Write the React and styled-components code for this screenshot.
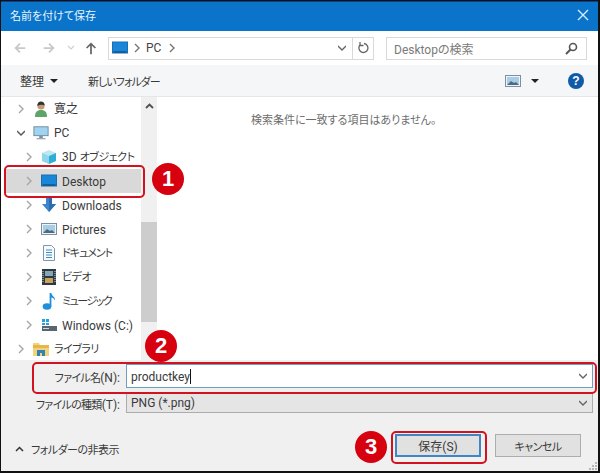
import React from "react";
import styled, { createGlobalStyle } from "styled-components";

const Global = createGlobalStyle`
  html, body { margin: 0; padding: 0; background: #fff; }
  * { box-sizing: border-box; }
`;

const Dialog = styled.div`
  position: relative;
  width: 600px;
  height: 473px;
  display: flex;
  flex-direction: column;
  overflow: hidden;
  background: #fff;
  border: solid #111;
  border-width: 1px 2px 2px 1px;
  font-family: Roboto, "Noto Sans CJK JP", sans-serif;
  font-size: 12px;
  font-feature-settings: "palt";
  color: #3a3a3a;
`;

// katakana in the dialog runs much narrower than Noto's, so it gets its own size
const Kana = styled.span`
  font-size: 11px;
  letter-spacing: ${(p) => p.$track ?? -0.5}px;
`;

const TitleBar = styled.div`
  height: 30px;
  flex: none;
  display: flex;
  align-items: center;
  justify-content: space-between;
  padding: 0 9px 3px;
  background: #0a74ca;
  border-top: 1px solid #0a3f8a;
  color: #e8f3fb;
  font-size: 11px;
`;

const NavBar = styled.div`
  height: 34px;
  flex: none;
  display: flex;
  align-items: center;
  padding: 0 6px 0 12px;
`;

const NavButton = styled.span`
  width: ${(p) => p.$w || 16}px;
  margin-right: ${(p) => p.$mr || 0}px;
  display: flex;
  justify-content: center;
`;

const AddressBox = styled.div`
  width: 266px;
  height: 23px;
  margin-left: 2px;
  display: flex;
  align-items: center;
  border: 1px solid #d9d9d9;
  padding-left: 3px;
  color: #444;
`;

const Crumb = styled.span`
  margin: 0 ${(p) => p.$gap || 5}px;
  display: flex;
`;

const AddressCaret = styled.svg`
  margin-left: auto;
  margin-right: 6px;
`;

const RefreshCell = styled.span`
  width: 21px;
  height: 100%;
  display: flex;
  align-items: center;
  justify-content: center;
  border-left: 1px solid #d9d9d9;
`;

const SearchBox = styled.div`
  width: 201px;
  height: 23px;
  margin-left: 12px;
  display: flex;
  align-items: center;
  justify-content: space-between;
  padding: 0 8px 0 7px;
  border: 1px solid #d9d9d9;
  color: #7a7a7a;
`;

const ToolBar = styled.div`
  height: 32px;
  flex: none;
  display: flex;
  align-items: center;
  padding: 0 14px 0 19px;
  background: #f5f6f7;
  border-bottom: 1px solid #e6e6e6;
`;

const ToolLabel = styled.span`
  display: flex;
  align-items: center;
  gap: 6px;
  margin-right: ${(p) => p.$mr || 0}px;
`;

const Caret = styled.span`
  width: 0;
  height: 0;
  border-left: 4px solid transparent;
  border-right: 4px solid transparent;
  border-top: 4px solid #222;
`;

const ToolRight = styled.div`
  margin-left: auto;
  display: flex;
  align-items: center;
  gap: 10px;
`;

const HelpIcon = styled.span`
  width: 16px;
  height: 16px;
  margin-left: 19px;
  border-radius: 50%;
  background: #0f5ba7;
  color: #fff;
  font: bold 12px/16px "Liberation Sans", sans-serif;
  text-align: center;
`;

const Body = styled.div`
  flex: 1;
  min-height: 0;
  display: flex;
`;

const Tree = styled.div`
  width: 140px;
  flex: none;
  padding-left: 3px;
  overflow: hidden;
`;

const TreeRow = styled.div`
  height: 24px;
  flex: none;
  display: flex;
  align-items: center;
  padding-left: ${(p) => (p.$level === 2 ? 21 : 13)}px;
  background: ${(p) => (p.$selected ? "#d9d9d9" : "transparent")};
  white-space: nowrap;
  line-height: 16px;
`;

const Chevron = styled.span`
  width: 8px;
  display: flex;
  justify-content: center;
  margin-right: 8px;
`;

const TreeIcon = styled.span`
  width: 16px;
  height: 16px;
  margin-right: 5px;
  display: flex;
  align-items: center;
  justify-content: center;
`;

const TreeText = styled.span`
  margin-top: ${(p) => (p.$latin ? 1 : 0)}px;
`;

const ScrollBar = styled.div`
  width: 16px;
  flex: none;
  background: #f0f0f0;
  display: flex;
  flex-direction: column;
  align-items: center;
`;

const ScrollArrow = styled.span`
  height: 16px;
  margin-top: 1px;
  display: flex;
  align-items: center;
`;

const ScrollThumb = styled.div`
  width: 100%;
  height: 100px;
  margin-top: 108px;
  background: #cdcdcd;
`;

const Main = styled.div`
  flex: 1;
  padding: 14px 0 0 94px;
  font-size: 11px;
  color: #6d6d6d;
`;

const Bottom = styled.div`
  height: 111px;
  flex: none;
  position: relative;
  background: #f0f0f0;
  padding: 4px 5px 0 0;
`;

const FormRow = styled.div`
  display: grid;
  grid-template-columns: 125px 1fr;
  align-items: center;
  height: ${(p) => p.$h}px;
  margin-bottom: ${(p) => p.$mb || 0}px;
`;

const FieldLabel = styled.label`
  text-align: right;
  padding-right: 6px;
  padding-top: 1px;
`;

const Field = styled.div`
  height: 100%;
  display: flex;
  align-items: center;
  justify-content: space-between;
  padding: 0 5px 0 4px;
  background: ${(p) => (p.$active ? "#fff" : "#e5e5e5")};
  border: 1px solid ${(p) => (p.$active ? "#6f9fc0" : "#acacac")};
`;

const TextCursor = styled.span`
  display: inline-block;
  width: 1px;
  height: 15px;
  background: #111;
  vertical-align: -3px;
`;

const Footer = styled.div`
  margin-top: 21px;
  display: flex;
  align-items: center;
  justify-content: space-between;
  padding: 0 12px 0 14px;
`;

const HideFolders = styled.span`
  display: flex;
  align-items: center;
  gap: 7px;
  padding-top: 6px;
`;

const Buttons = styled.div`
  display: flex;
  gap: 14px;
`;

const Button = styled.button`
  width: 86px;
  height: 23px;
  padding: 0;
  font: inherit;
  font-feature-settings: "palt";
  color: #3a3a3a;
  background: #e1e1e1;
  border: ${(p) => (p.$primary ? "2px solid #3f86c4" : "1px solid #adadad")};
`;

const Grip = styled.svg`
  position: absolute;
  right: 0;
  bottom: 0;
`;

const Ring = styled.div`
  position: absolute;
  left: ${(p) => p.$x}px;
  top: ${(p) => p.$y}px;
  width: ${(p) => p.$w}px;
  height: ${(p) => p.$h}px;
  border: 2px solid #d3121f;
  border-radius: 5px;
`;

const Badge = styled.div`
  position: absolute;
  left: ${(p) => p.$x - 16}px;
  top: ${(p) => p.$y - 16}px;
  width: 32px;
  height: 32px;
  border-radius: 50%;
  background: #d7000f;
  color: #fff;
  font: bold 22px/32px "Liberation Sans", sans-serif;
  text-align: center;
`;

const Arrow = ({ d, color = "#c8c8c8", width = 2 }) => (
  <svg width="16" height="16" viewBox="0 0 16 16" fill="none" stroke={color} strokeWidth={width}>
    <path d={d} />
  </svg>
);

const Chev = ({ open, color = "#a6a6a6" }) => (
  <svg width="8" height="10" viewBox="0 0 8 10" fill="none" stroke={color} strokeWidth="1.4">
    <path d={open ? "M0 3l4 4 4-4" : "M2 1l4 4-4 4"} />
  </svg>
);

const ScreenIcon = () => (
  <svg width="16" height="14" viewBox="0 0 16 14">
    <rect x="0.5" y="1" width="15" height="11" fill="#1a86d8" stroke="#1a6fb4" />
    <rect x="1.5" y="10.5" width="13" height="1" fill="#0d3e66" />
  </svg>
);

const PcIcon = () => (
  <svg width="18" height="16" viewBox="0 0 18 16">
    <rect x="1" y="1" width="16" height="10" fill="#9fd3f2" stroke="#6f8596" />
    <path d="M7 11.5h4v2H7zM4 14h10v1H4z" fill="#7f8f9b" />
  </svg>
);

const UserIcon = () => (
  <svg width="16" height="16" viewBox="0 0 16 16">
    <path d="M2 16c0-5 2-7 6-7s6 2 6 7z" fill="#5ea36a" />
    <circle cx="8" cy="5" r="3.6" fill="#c59a72" />
    <path d="M4.3 5c0-3 1.6-4.4 3.7-4.4S11.700 2 11.700 4.500C9.500 3.500 7 3.500 4.300 5z" fill="#333" />
  </svg>
);

const CubeIcon = () => (
  <svg width="16" height="16" viewBox="0 0 16 16">
    <path d="M8 1l7 3v8l-7 3-7-3V4z" fill="#bfe7f3" />
    <path d="M8 7l7-3v8l-7 3z" fill="#2eaed6" />
    <path d="M8 7L1 4v8l7 3z" fill="#8fd6ea" />
  </svg>
);

const DownloadIcon = () => (
  <svg width="16" height="16" viewBox="0 0 16 16">
    <path d="M5 1h6v6h4l-7 8-7-8h4z" fill="#3d86cf" />
    <path d="M8 1h3v6h4l-7 8z" fill="#2a6db0" />
  </svg>
);

const PictureIcon = () => (
  <svg width="16" height="14" viewBox="0 0 16 14">
    <rect x="0.500" y="1.500" width="15" height="11" fill="#eef4f9" stroke="#7f8f9b" />
    <rect x="2" y="3" width="12" height="8" fill="#a8cde6" />
    <path d="M2 11l4-4 3 2 2-1 3 3z" fill="#4f6a7d" />
  </svg>
);

const DocIcon = () => (
  <svg width="14" height="16" viewBox="0 0 14 16">
    <path d="M1.500.5h8l3 3v12h-11z" fill="#f6fafd" stroke="#7f95a8" />
    <path d="M4 5h6M4 7.500h6M4 10h6M4 12.500h6" stroke="#3b8fc4" />
  </svg>
);

const VideoIcon = () => (
  <svg width="14" height="16" viewBox="0 0 14 16">
    <rect x="0" y="0" width="14" height="16" fill="#2d3a42" />
    <rect x="3" y="2" width="8" height="5" fill="#86a7b8" />
    <rect x="3" y="9" width="8" height="5" fill="#c9a35d" />
    <path d="M1 2v12M13 2v12" stroke="#d8e0e4" strokeDasharray="1 1" />
  </svg>
);

const MusicIcon = () => (
  <svg width="14" height="18" viewBox="0 0 14 18">
    <ellipse cx="5" cy="14.500" rx="4.300" ry="3.200" fill="#1f8fdc" />
    <path d="M7.600 14.500V1h1.800c.3 3 4 3.500 3.600 7.500-.8-2-2.500-3-3.600-3v9z" fill="#1f8fdc" />
  </svg>
);

const DriveIcon = () => (
  <svg width="16" height="14" viewBox="0 0 16 14">
    <rect x="1" y="8" width="15" height="5" fill="#59666e" />
    <rect x="2" y="10" width="6" height="1" fill="#cfd8dc" />
    <rect x="1" y="1" width="3" height="3" fill="#27a2dd" />
    <rect x="5" y="1" width="3" height="3" fill="#27a2dd" />
    <rect x="1" y="5" width="3" height="2" fill="#27a2dd" />
    <rect x="5" y="5" width="3" height="2" fill="#27a2dd" />
  </svg>
);

const LibraryIcon = () => (
  <svg width="16" height="16" viewBox="0 0 16 16">
    <path d="M0 2h6l1 2h9v11H0z" fill="#f4d27a" />
    <path d="M0 4h16v3H0z" fill="#e6b64d" />
    <rect x="4" y="9" width="8" height="6" fill="#2f82b8" />
    <rect x="7" y="12" width="2" height="3" fill="#f4d27a" />
  </svg>
);

const treeItems = [
  { level: 1, icon: <UserIcon />, label: "寛之" },
  { level: 1, icon: <PcIcon />, label: "PC", open: true },
  { level: 2, icon: <CubeIcon />, label: <>3D <Kana>オブジェクト</Kana></> },
  { level: 2, icon: <ScreenIcon />, label: "Desktop", selected: true, latin: true },
  { level: 2, icon: <DownloadIcon />, label: "Downloads", latin: true },
  { level: 2, icon: <PictureIcon />, label: "Pictures", latin: true },
  { level: 2, icon: <DocIcon />, label: <Kana $track={-1}>ドキュメント</Kana> },
  { level: 2, icon: <VideoIcon />, label: <Kana>ビデオ</Kana> },
  { level: 2, icon: <MusicIcon />, label: <Kana $track={-1.500}>ミュージック</Kana> },
  { level: 2, icon: <DriveIcon />, label: "Windows (C:)", latin: true },
  { level: 1, icon: <LibraryIcon />, label: <Kana>ライブラリ</Kana> },
];

export default function App() {
  return (
    <>
      <Global />
      <Dialog>
        <TitleBar>
          <span>名前を付けて保存</span>
          <svg width="12" height="12" viewBox="0 0 12 12" stroke="#d5ecfb" strokeWidth="1.4">
            <path d="M1 1l10 10M11 1L1 11" />
          </svg>
        </TitleBar>
        <NavBar>
          <NavButton $w={14} $mr={15}><Arrow d="M14 8H3M8 3L3 8l5 5" /></NavButton>
          <NavButton $w={14} $mr={10}><Arrow d="M2 8h11M8 3l5 5-5 5" /></NavButton>
          <NavButton $w={10} $mr={8}>
            <svg width="8" height="6" viewBox="0 0 8 6" fill="none" stroke="#cfcfcf" strokeWidth="1.2"><path d="M1 1l3 3 3-3" /></svg>
          </NavButton>
          <NavButton $w={14} $mr={8}><Arrow d="M8 15V3M3 8l5-5 5 5" color="#666" /></NavButton>
          <AddressBox>
            <ScreenIcon />
            <Crumb $gap={5}><Chev color="#777" /></Crumb>
            <span>PC</span>
            <Crumb $gap={7}><Chev color="#777" /></Crumb>
            <AddressCaret width="8" height="6" viewBox="0 0 8 6" fill="none" stroke="#666" strokeWidth="1.4"><path d="M0 1l4 4 4-4" /></AddressCaret>
            <RefreshCell>
              <svg width="12" height="14" viewBox="0 0 12 14" fill="none" stroke="#666" strokeWidth="1.3">
                <path d="M7 2.500a4.500 4.500 0 1 1-4 1.500M3 1v3.500h3.500" />
              </svg>
            </RefreshCell>
          </AddressBox>
          <SearchBox>
            <span>Desktopの検索</span>
            <svg width="13" height="13" viewBox="0 0 13 13" fill="none" stroke="#555" strokeWidth="1.600">
              <circle cx="8" cy="5" r="3.500" />
              <path d="M5.500 7.500L1 12" strokeWidth="2" />
            </svg>
          </SearchBox>
        </NavBar>
        <ToolBar>
          <ToolLabel $mr={30}>整理 <Caret /></ToolLabel>
          <ToolLabel><Kana $track={-1}>新しいフォルダー</Kana></ToolLabel>
          <ToolRight>
            <PictureIcon />
            <Caret />
            <HelpIcon>?</HelpIcon>
          </ToolRight>
        </ToolBar>
        <Body>
          <Tree>
            {treeItems.map((item, i) => (
              <TreeRow key={i} $level={item.level} $selected={item.selected}>
                <Chevron><Chev open={item.open} color={item.open ? "#555" : "#a6a6a6"} /></Chevron>
                <TreeIcon>{item.icon}</TreeIcon>
                <TreeText $latin={item.latin}>{item.label}</TreeText>
              </TreeRow>
            ))}
          </Tree>
          <ScrollBar>
            <ScrollArrow>
              <svg width="9" height="6" viewBox="0 0 9 6" fill="none" stroke="#505050" strokeWidth="1.800"><path d="M1 5l3.500-3.500L8 5" /></svg>
            </ScrollArrow>
            <ScrollThumb />
          </ScrollBar>
          <Main>検索条件に一致する項目はありません。</Main>
        </Body>
        <Bottom>
          <FormRow $h={24} $mb={5}>
            <FieldLabel><Kana $track={-0.700}>ファイル名</Kana>(N):</FieldLabel>
            <Field $active>
              <span>productkey<TextCursor /></span>
              <Chev open color="#666" />
            </Field>
          </FormRow>
          <FormRow $h={20}>
            <FieldLabel><Kana $track={-0.700}>ファイルの種類</Kana>(T):</FieldLabel>
            <Field>
              <span>PNG (*.png)</span>
              <Chev open color="#666" />
            </Field>
          </FormRow>
          <Footer>
            <HideFolders>
              <svg width="9" height="6" viewBox="0 0 9 6" fill="none" stroke="#333" strokeWidth="1.500"><path d="M1 5l3.500-3.500L8 5" /></svg>
              <Kana $track={-0.500}>フォルダーの非表示</Kana>
            </HideFolders>
            <Buttons>
              <Button $primary>保存(S)</Button>
              <Button><Kana>キャンセル</Kana></Button>
            </Buttons>
          </Footer>
          <Grip width="10" height="10" viewBox="0 0 10 10" fill="#b5b5b5">
            <path d="M7 1h2v2H7zM4 4h2v2H4zM7 4h2v2H7zM1 7h2v2H1zM4 7h2v2H4zM7 7h2v2H7z" />
          </Grip>
        </Bottom>
        <Ring $x={3} $y={164} $w={141} $h={33} />
        <Ring $x={31} $y={361} $w={565} $h={32} />
        <Ring $x={390} $y={430} $w={96} $h={33} />
        <Badge $x={167} $y={178}>1</Badge>
        <Badge $x={160} $y={345}>2</Badge>
        <Badge $x={370} $y={446}>3</Badge>
      </Dialog>
    </>
  );
}
